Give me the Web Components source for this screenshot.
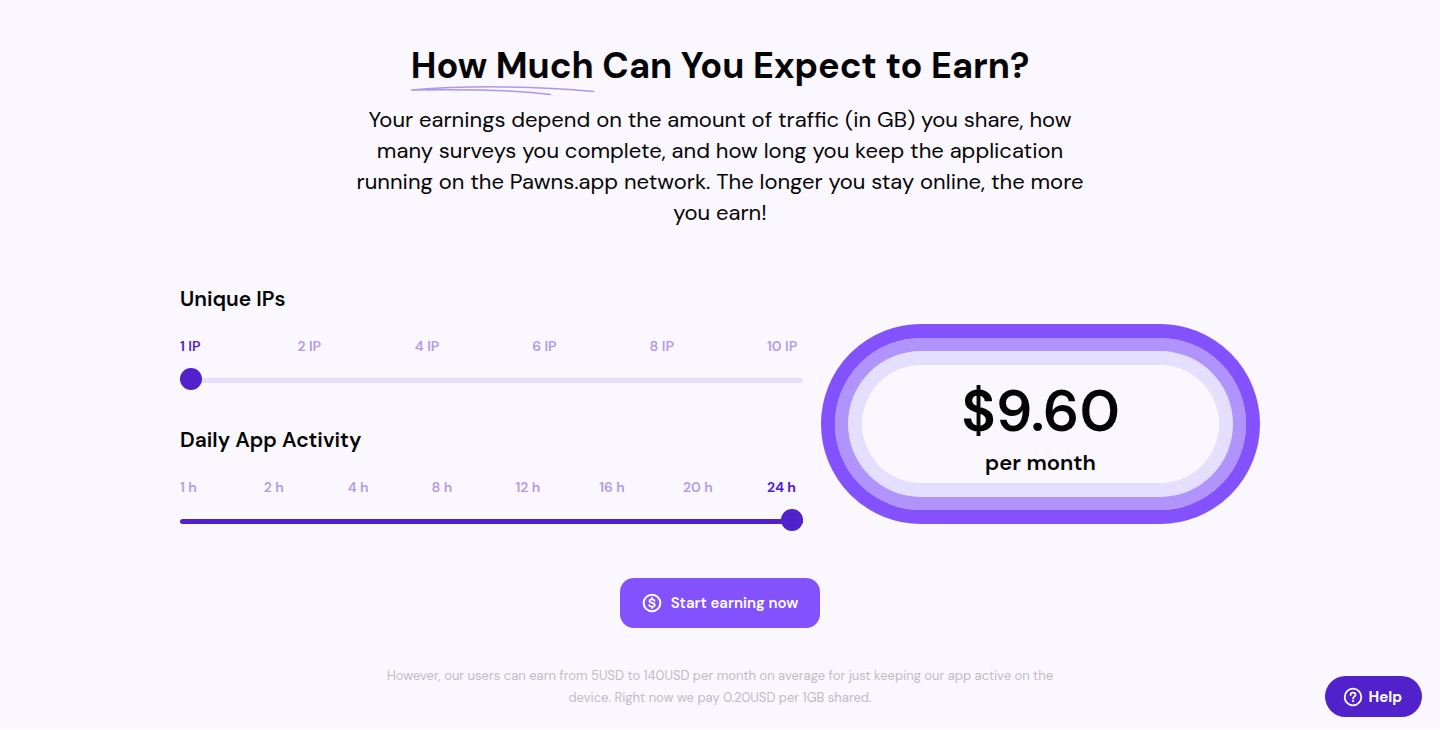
<!DOCTYPE html>
<html lang="en">
<head>
<meta charset="utf-8">
<meta name="viewport" content="width=device-width, initial-scale=1">
<title>Pawns.app – Earnings calculator</title>
<style>
html{background:#fff}
body{margin:0;font-family:"DM Sans",Inter,"Liberation Sans",sans-serif;color:#050505;
--bg:#faf7ff;--deep:#5122cb;--brand:#8352fe;--soft:#b094fc;--pale:#e5dffe;--muted:#b49be4}
</style>
</head>
<body>
<earnings-section></earnings-section>
<help-button>Help</help-button>

<template id="section-tpl">
<style>
:host{display:block;background:var(--bg)}
main{max-width:1080px;margin:0 auto;padding:42px 24px 20px;display:flex;flex-direction:column;align-items:center}
h2{margin:0;font-size:36px;line-height:48px;font-weight:700;text-align:center}
.lead{margin:14px 0 0;max-width:740px;font-size:22px;line-height:31px;text-align:center}
.calc{width:100%;margin-top:57px;display:grid;grid-template-columns:623fr 439fr;gap:18px;align-items:center}
.sliders{display:flex;flex-direction:column;gap:36px;padding-bottom:32px;min-width:0}
cta-button{margin-top:15px}
.note{margin:37px 0 0;max-width:700px;font-size:13px;line-height:22px;color:#bfbcc6;text-align:center}
@media(max-width:900px){.calc{grid-template-columns:1fr}}
</style>
<main>
<h2><under-lined>How Much</under-lined> Can You Expect to Earn?</h2>
<p class="lead">Your earnings depend on the amount of traffic (in GB) you share, how many surveys you complete, and how long you keep the application running on the Pawns.app network. The longer you stay online, the more you earn!</p>
<div class="calc">
<div class="sliders">
<step-slider id="ips" steps="1,2,4,6,8,10" unit="IP" index="0">Unique IPs</step-slider>
<step-slider id="hours" steps="1,2,4,8,12,16,20,24" unit="h" index="7">Daily App Activity</step-slider>
</div>
<earn-badge><span id="amount">$9.60</span><span slot="period">per month</span></earn-badge>
</div>
<cta-button>Start earning now</cta-button>
<p class="note">However, our users can earn from 5USD to 140USD per month on average for just keeping our app active on the device. Right now we pay 0.20USD per 1GB shared.</p>
</main>
</template>

<template id="underlined-tpl">
<style>
:host{display:inline-block;position:relative}
svg{position:absolute;left:0;top:43px;width:100%;height:11px;overflow:visible}
path{fill:none;stroke:#b094ee;stroke-width:1.5;stroke-linecap:round}
</style>
<slot></slot>
<svg viewBox="0 0 184 11" preserveAspectRatio="none" aria-hidden="true"><path d="M.5 5C52 .7 121 .5 183.500 6.500M.5 5C49 4.300 102 4.500 140 9.500"/></svg>
</template>

<template id="slider-tpl">
<style>
:host{display:block}
.title{display:block;font-size:21px;line-height:28px;font-weight:600}
.steps{margin-top:23px;display:flex;justify-content:space-between;font-size:14px;line-height:20px;font-weight:600;color:var(--muted)}
.steps span{width:36px;white-space:nowrap}
.steps .on{color:var(--deep)}
.steps .on.last{font-weight:700}
input{-webkit-appearance:none;appearance:none;display:block;width:100%;height:22px;margin:12px 0 0;background:none;cursor:pointer}
input::-webkit-slider-runnable-track{height:5px;border-radius:3px;margin-top:3px;background:linear-gradient(var(--deep),var(--deep)) 0/var(--fill) 100% no-repeat var(--pale)}
input::-webkit-slider-thumb{-webkit-appearance:none;width:22px;height:22px;margin-top:-10px;border-radius:50%;background:var(--deep)}
</style>
<label class="title" for="range"><slot></slot></label>
<div class="steps"></div>
<input id="range" type="range" min="0" step="1">
</template>

<template id="badge-tpl">
<style>
:host{display:flex;flex-direction:column;align-items:center;justify-content:center;box-sizing:border-box;height:200px;padding-top:10px;border-radius:100px;border:14px solid var(--brand);box-shadow:inset 0 0 0 13px var(--soft),inset 0 0 0 27px var(--pale)}
.sum{font-size:58px;line-height:68px;font-weight:600}
.per{font-size:22px;line-height:36px;font-weight:600}
</style>
<div class="sum"><slot></slot></div><div class="per"><slot name="period"></slot></div>
</template>

<template id="cta-tpl">
<style>
:host{display:block}
button{display:flex;align-items:center;gap:9px;height:50px;padding:0 22px;border:0;border-radius:14px;background:var(--brand);color:#fff;font:600 15px/20px "DM Sans",Inter,"Liberation Sans",sans-serif;cursor:pointer}
svg{width:20px;height:20px;fill:none;stroke:#fff;stroke-width:2;stroke-linecap:round}
</style>
<button type="button"><svg viewBox="0 0 20 20" aria-hidden="true"><circle cx="10" cy="10" r="8.300"/><path stroke-width="1.800" d="M12.600 7.900C12.300 6.900 11.300 6.400 10 6.400c-1.500 0-2.500.7-2.500 1.700 0 2.600 5.200 1.100 5.200 3.800 0 1.100-1.100 1.800-2.700 1.800-1.500 0-2.600-.6-2.900-1.700M10 5v1.400M10 13.700V15"/></svg><slot></slot></button>
</template>

<template id="help-tpl">
<style>
:host{display:block;position:fixed;right:18px;bottom:13px}
button{display:flex;align-items:center;gap:5px;height:41px;padding:0 20px 0 18px;border:0;border-radius:21px;background:var(--deep);color:#fff;font:700 15px/20px "DM Sans",Inter,"Liberation Sans",sans-serif;cursor:pointer}
svg{width:20px;height:20px;fill:none;stroke:#fff;stroke-width:1.800;stroke-linecap:round;stroke-linejoin:round}
</style>
<button type="button"><svg viewBox="0 0 20 20" aria-hidden="true"><circle cx="10" cy="10" r="8.300"/><path d="M7.600 8c.1-1.500 1.100-2.300 2.500-2.300 1.400 0 2.400.8 2.400 2.100 0 1.700-2.400 1.900-2.400 3.600"/><circle cx="10.100" cy="14" r=".3"/></svg><slot></slot></button>
</template>

<script>
class Base extends HTMLElement{
  constructor(){
    super();
    this.attachShadow({mode:'open'}).append(document.getElementById(this.constructor.tpl).content.cloneNode(true));
  }
}
customElements.define('under-lined',class extends Base{static tpl='underlined-tpl'});
customElements.define('earn-badge',class extends Base{static tpl='badge-tpl'});
customElements.define('cta-button',class extends Base{static tpl='cta-tpl'});
customElements.define('help-button',class extends Base{static tpl='help-tpl'});
customElements.define('step-slider',class extends Base{
  static tpl='slider-tpl';
  connectedCallback(){
    this.values=this.getAttribute('steps').split(',').map(Number);
    this.input=this.shadowRoot.querySelector('input');
    this.input.max=this.values.length-1;
    this.input.value=this.getAttribute('index');
    this.shadowRoot.querySelector('.steps').append(...this.values.map(v=>{
      const s=document.createElement('span');
      s.textContent=v+' '+this.getAttribute('unit');
      return s;
    }));
    this.input.oninput=()=>{this.paint();this.dispatchEvent(new Event('change'))};
    this.paint();
  }
  get value(){return this.values[this.input.value]}
  paint(){
    const i=+this.input.value,n=this.values.length-1;
    this.input.style.setProperty('--fill',i/n*100+'%');
    this.input.setAttribute('aria-valuetext',this.value+' '+this.getAttribute('unit'));
    this.shadowRoot.querySelectorAll('.steps span').forEach((s,k)=>{
      s.classList.toggle('on',k===i);
      s.classList.toggle('last',k===n);
    });
  }
});
customElements.define('earnings-section',class extends Base{
  static tpl='section-tpl';
  connectedCallback(){
    const $=id=>this.shadowRoot.getElementById(id);
    for(const s of [$('ips'),$('hours')])
      s.addEventListener('change',()=>{$('amount').textContent='$'+($('ips').value*$('hours').value*0.4).toFixed(2)});
  }
});
</script>
</body>
</html>
